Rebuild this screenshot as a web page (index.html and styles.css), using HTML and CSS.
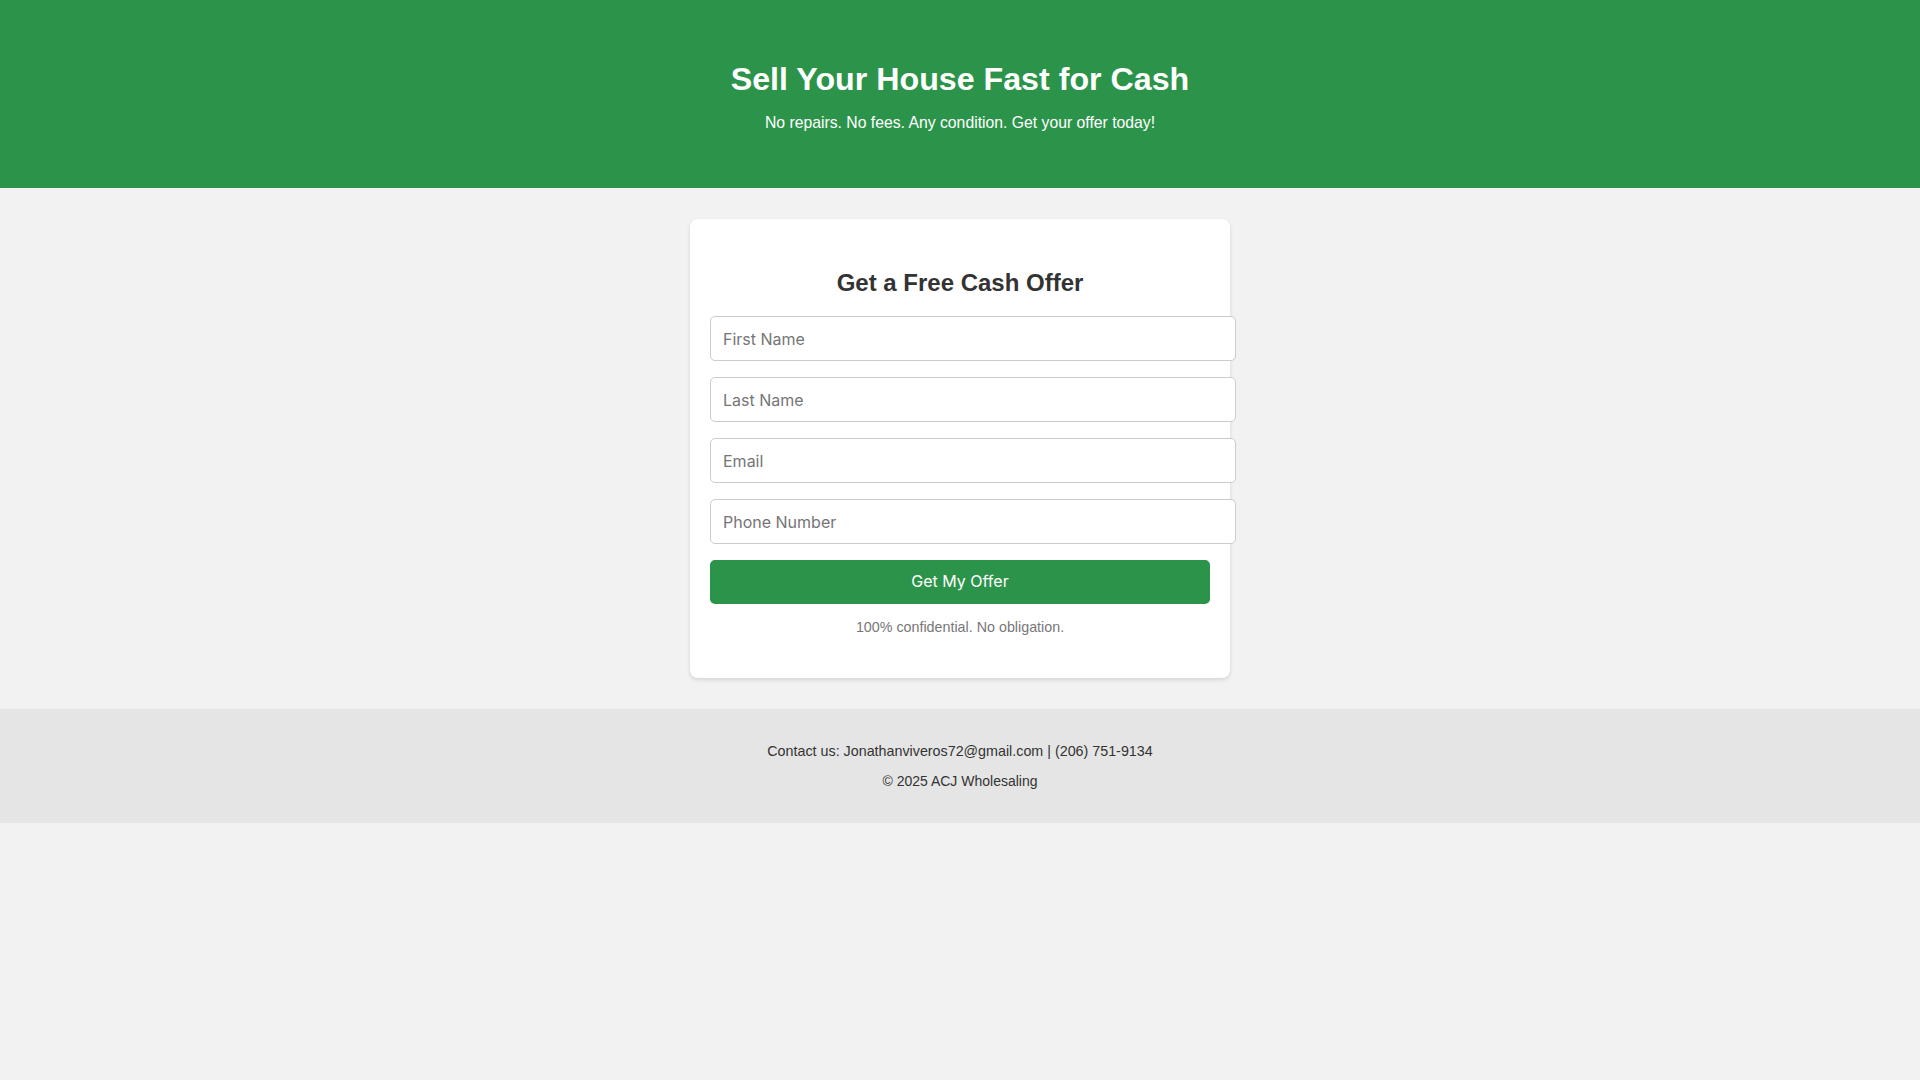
FILE: index.html
```html
<!DOCTYPE html>
<html lang="en">
<head>
<meta charset="utf-8">
<title>Sell Your House Fast for Cash</title>
<link rel="stylesheet" href="styles.css">
</head>
<body>
<header class="hero">
  <h1 class="hero-title">Sell Your House Fast for Cash</h1>
  <p class="hero-sub">No repairs. No fees. Any condition. Get your offer today!</p>
</header>
<main class="main">
  <section class="card">
    <h2 class="card-title">Get a Free Cash Offer</h2>
    <form class="offer-form">
      <input class="field" type="text" placeholder="First Name">
      <input class="field" type="text" placeholder="Last Name">
      <input class="field" type="email" placeholder="Email">
      <input class="field" type="tel" placeholder="Phone Number">
      <button class="submit" type="button">Get My Offer</button>
    </form>
    <p class="note">100% confidential. No obligation.</p>
  </section>
</main>
<footer class="footer">
  <p class="footer-line footer-contact">Contact us: Jonathanviveros72@gmail.com | (206) 751-9134</p>
  <p class="footer-line">&copy; 2025 ACJ Wholesaling</p>
</footer>
</body>
</html>
```
FILE: styles.css
```css
html, body {
  margin: 0;
  padding: 0;
}
body {
  background: #f2f2f2;
  font-family: "Liberation Sans", Arial, sans-serif;
  color: #333;
}
.hero {
  background: #2c944a;
  color: #fff;
  text-align: center;
  padding: 61px 20px 56px;
}
.hero-title {
  margin: 0 0 15.5px;
  font-size: 32.2px;
  line-height: 37px;
  font-weight: bold;
}
.hero-sub {
  margin: 0;
  font-size: 15.75px;
  line-height: 18px;
}
.main {
  padding: 31px 20px;
  display: flex;
  justify-content: center;
}
.card {
  width: 500px;
  background: #fff;
  padding: 30px 20px;
  border-radius: 8px;
  box-shadow: 0 2px 4px rgba(0, 0, 0, 0.12);
}
.card-title {
  margin: 20px 0;
  text-align: center;
  font-size: 24px;
  line-height: 27.5px;
  font-weight: bold;
  color: #333;
}
.offer-form {
  display: flex;
  flex-direction: column;
  align-items: flex-start;
}
.field {
  display: block;
  width: 100%;
  height: 19px;
  padding: 12px;
  margin: 0 0 16px;
  border: 1px solid #ccc;
  border-radius: 5px;
  font-family: Inter, "Noto Sans", sans-serif;
  font-size: 16px;
  color: #333;
  background: #fff;
  outline: none;
}
.field::placeholder {
  color: #757575;
}
.submit {
  width: 100%;
  padding: 12px;
  border: none;
  border-radius: 5px;
  background: #2c944a;
  color: #fff;
  font-family: Inter, "Noto Sans", sans-serif;
  font-size: 16px;
  line-height: 19.5px;
  cursor: pointer;
}
.note {
  margin: 15px 0 13px;
  text-align: center;
  font-size: 14.3px;
  line-height: 16.5px;
  color: #777;
}
.footer {
  background: #e5e5e5;
  text-align: center;
  padding: 20px;
}
.footer-line {
  margin: 14px 0;
  font-size: 14px;
  line-height: 16px;
  color: #333;
}
.footer-contact {
  font-size: 14.3px;
}
```
